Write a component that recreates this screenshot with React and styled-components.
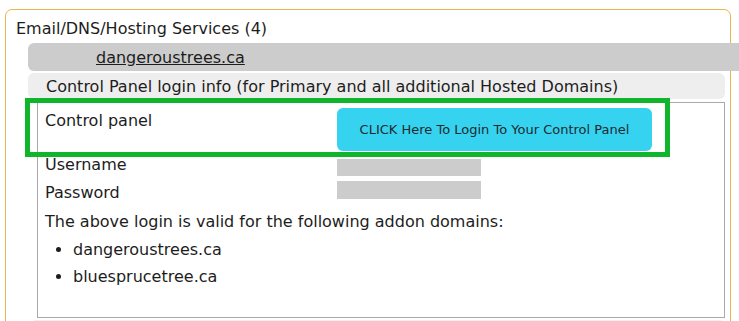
import React from "react";
import styled, { createGlobalStyle } from "styled-components";

const GlobalStyle = createGlobalStyle`
  html, body {
    margin: 0;
    padding: 0;
    background: #fff;
    overflow: hidden;
  }
  body {
    font-family: "DejaVu Sans", "Open Sans", sans-serif;
    color: #1d1d1d;
  }
`;

const Panel = styled.div`
  position: relative;
  margin: 9px 8px 0 5px;
  min-height: 340px;
  border: 1px solid #e8b64c;
  border-radius: 7px;
  padding: 0 5px 0 0;
`;

const PanelTitle = styled.div`
  font-size: 16px;
  line-height: 20px;
  padding: 9px 0 4px 10px;
`;

const DomainBar = styled.div`
  margin: 0 -20px 2px 22px;
  height: 28px;
  background: #cccccc;
  border-radius: 6px 0 0 6px;
  padding-left: 68px;
  display: flex;
  align-items: center;
  font-size: 16px;

  a {
    color: #1d1d1d;
    text-decoration: underline;
  }
`;

const SectionBar = styled.div`
  margin: 0 0 3px 22px;
  height: 26px;
  background: #eeeeee;
  border-radius: 6px;
  padding-left: 18px;
  display: flex;
  align-items: center;
  font-size: 16px;
`;

const InfoBox = styled.div`
  margin-left: 31px;
  border: 1px solid #a9a9a9;
  padding: 5px 8px 0 7px;
  height: 209px;
  font-size: 16px;
`;

const Row = styled.div`
  display: flex;
  align-items: flex-start;
  height: ${(p) => p.$height}px;
`;

const Label = styled.div`
  width: 292px;
  line-height: 22px;
  margin-top: ${(p) => p.$top || 0}px;
`;

const LoginButton = styled.a`
  width: 315px;
  height: 43px;
  border-radius: 6px;
  background: #35d3ef;
  color: #1f2a30;
  font-size: 13px;
  display: flex;
  align-items: center;
  justify-content: center;
  text-decoration: none;
  cursor: pointer;
`;

const HiddenField = styled.div`
  width: 144px;
  height: ${(p) => p.$height}px;
  margin-top: ${(p) => p.$top}px;
  background: #cccccc;
`;

const Note = styled.p`
  margin: 4px 0 0;
  line-height: 22px;
`;

const DomainList = styled.ul`
  margin: 6px 0 0;
  padding-left: 28px;

  li {
    line-height: 22px;
    margin-bottom: 5px;
  }
`;

const NextBar = styled.div`
  margin: 2px 0 0 24px;
  height: 26px;
  background: #eeeeee;
  border-radius: 6px;
`;

const Highlight = styled.div`
  position: absolute;
  left: 19px;
  top: 88px;
  width: 645px;
  height: 59px;
  box-sizing: border-box;
  border: 5px solid #0fb52b;
  pointer-events: none;
`;

export default function App() {
  return (
    <>
      <GlobalStyle />
      <Panel>
        <PanelTitle>Email/DNS/Hosting Services (4)</PanelTitle>
        <DomainBar>
          <a href="#">dangeroustrees.ca</a>
        </DomainBar>
        <SectionBar>
          Control Panel login info (for Primary and all additional Hosted Domains)
        </SectionBar>
        <InfoBox>
          <Row $height={47}>
            <Label $top={2}>Control panel</Label>
            <LoginButton>CLICK Here To Login To Your Control Panel</LoginButton>
          </Row>
          <Row $height={28}>
            <Label $top={-1}>Username</Label>
            <HiddenField $top={4} $height={17} />
          </Row>
          <Row $height={24}>
            <Label $top={-1}>Password</Label>
            <HiddenField $top={-2} $height={18} />
          </Row>
          <Note>The above login is valid for the following addon domains:</Note>
          <DomainList>
            <li>dangeroustrees.ca</li>
            <li>bluesprucetree.ca</li>
          </DomainList>
        </InfoBox>
        <NextBar />
        <Highlight />
      </Panel>
    </>
  );
}
